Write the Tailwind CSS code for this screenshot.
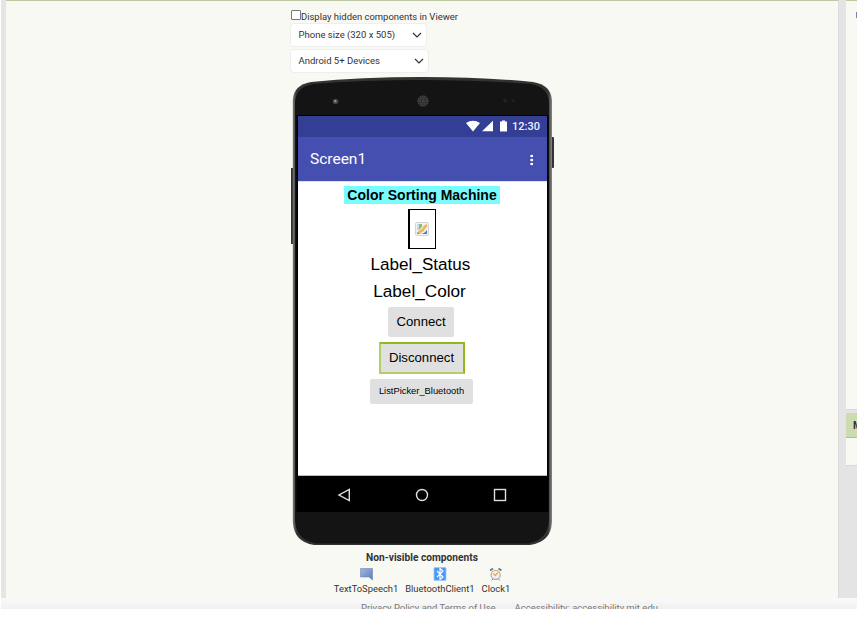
<!DOCTYPE html>
<html lang="en">
<head>
<meta charset="utf-8">
<title>Designer</title>
<script src="https://cdn.jsdelivr.net/npm/@tailwindcss/browser@4"></script>
</head>
<body class="w-[857px] h-[619px] overflow-hidden bg-white font-['Roboto',sans-serif] text-[#333]">
<div class="flex h-[598px] pl-px bg-white">
  <div class="flex w-full bg-[#e4e4e4]">
    <div class="w-[5px] shrink-0 bg-[#e5e5e6]"></div>
    <main class="w-[832px] shrink-0 h-[598px] bg-[#f8f9f3] border-t border-[#bcc8a2] flex flex-col pl-[284px]">
      <label class="flex items-start h-[22px] pt-[9px] text-[9.450px] leading-[14px] whitespace-nowrap pl-px">
        <span class="w-[10px] h-[10px] bg-white border border-[#777] rounded-[1px] shrink-0"></span>
        <span>Display hidden components in Viewer</span>
      </label>
      <div class="w-[137px] h-[24px] bg-white rounded-[4px] border border-[#eeeeec] flex items-center justify-between pl-[7.500px] pr-[4px] text-[9.500px] whitespace-nowrap">
        <span>Phone size (320 x 505)</span>
        <svg width="10" height="10" viewBox="0 0 10 10" fill="none" stroke="#333" stroke-width="1.2"><path d="M1 3l4 4 4-4"/></svg>
      </div>
      <div class="mt-[2px] w-[139px] h-[24px] bg-white rounded-[4px] border border-[#eeeeec] flex items-center justify-between pl-[7.500px] pr-[4px] text-[9.500px] whitespace-nowrap">
        <span>Android 5+ Devices</span>
        <svg width="10" height="10" viewBox="0 0 10 10" fill="none" stroke="#333" stroke-width="1.2"><path d="M1 3l4 4 4-4"/></svg>
      </div>
      <div class="relative w-[264px] h-[473px] ml-px mt-[3px] shrink-0 pl-[7px] pt-[40px]">
        <svg class="absolute left-0 top-0" width="264" height="473" viewBox="0 0 264 473">
          <defs><linearGradient id="rim" x1="0" x2="1" y1="0" y2="0"><stop offset="0" stop-color="#777"/><stop offset=".015" stop-color="#333"/><stop offset=".985" stop-color="#333"/><stop offset="1" stop-color="#888"/></linearGradient></defs>
          <rect x="-.5" y="92" width="3" height="76" rx="1" fill="#333"/>
          <rect x="260" y="61" width="3" height="31" rx="1" fill="#333"/>
          <path d="M1.800 24Q2.500 9 20 6Q70 1 131 1Q192 1 242 6Q260 9 261 24V446Q260 466 239 469H23Q3 466 1.800 446Z" fill="url(#rim)"/>
          <path d="M4 26Q5 11 22 8Q72 4 131 4Q190 4 240 8Q257 11 258 26V444Q257 464 237 467.500H25Q5 464 4 444Z" fill="#141414"/>
          <path d="M5.500 39H257.500V436H5.500Z" fill="#000"/>
          <circle cx="44.500" cy="25.500" r="2.800" fill="#44424a"/><circle cx="44.300" cy="25.200" r="1.100" fill="#9492b4"/>
          <circle cx="132" cy="25" r="5.500" fill="#2c2c2c"/>
          <g fill="none" stroke="#606060" stroke-width="1" stroke-dasharray="1 1"><circle cx="132" cy="25" r="5"/><circle cx="132" cy="25" r="3"/><circle cx="132" cy="25" r="1"/></g>
          <circle cx="214" cy="24.500" r="2" fill="#222"/><circle cx="222" cy="24.500" r="1.500" fill="#202020"/>
        </svg>
        <div class="relative w-[249px] h-[395px] flex flex-col">
          <div class="h-[21px] bg-[#333f94] flex items-center justify-end pr-[7px] text-[11px] leading-[20px] font-medium text-[#eef0ff]">
            <svg class="mr-[5px] shrink-0 -mt-[2px]" width="41" height="12" viewBox="0 0 41 12" fill="#fff"><path d="M0 3Q7-1.500 14 3L7 11.500Z"/><path d="M27 .8V11.300H16Z"/><path d="M34 1.500h2V.5h3v1h2v10h-7Z"/></svg>
            <span>12:30</span>
          </div>
          <div class="h-[44px] bg-[#444fb0] flex items-center justify-between pl-[12px] pr-[13px] pt-px text-white text-[15.500px]">
            <span>Screen1</span>
            <svg width="4" height="12" viewBox="0 0 4 12" fill="#fff"><rect x=".4" y=".9" width="2.600" height="2.200"/><rect x=".4" y="4.900" width="2.600" height="2.200"/><rect x=".4" y="8.900" width="2.600" height="2.200"/></svg>
          </div>
          <div class="h-[295px] bg-white border-t border-t-[#dedff0] border-b border-b-[#bbb] flex flex-col items-center pt-[4px] pr-px text-black font-['Liberation_Sans',Arial,sans-serif] whitespace-nowrap">
            <div class="w-[156px] h-[18px] bg-[#78fcfd] text-[14px] leading-[18px] font-bold text-center">Color Sorting Machine</div>
            <div class="mt-[5px] w-[28px] h-[40px] border border-black flex items-center justify-center shrink-0 border-l-2">
              <svg class="-ml-px" width="14" height="14" viewBox="0 0 14 14"><rect x=".5" y=".5" width="13" height="13" rx="1.500" fill="#f3f4f2" stroke="#d2d4d8"/><path d="M2 2h3v3L2 9Z" fill="#cad7f2"/><path d="M2 12Q3 8 7 7Q8 3 12 2V5Q10 6 9 9Q6 11 2 12Z" fill="#f1b65c"/><path d="M4 2h3Q8 6 3 8Q5 5 4 2Z" fill="#91bd62"/><path d="M12 8v4H6Q10 11 12 8Z" fill="#527cc8"/><path d="M2 10v2h4Z" fill="#7c9dd8"/></svg>
            </div>
            <div class="mt-[4px] h-[24px] text-[17.100px] leading-[24px] mr-[3px]">Label_Status</div>
            <div class="mt-[2px] h-[24px] text-[17.200px] leading-[24px] mr-[5px]">Label_Color</div>
            <div class="mt-[4px] mr-[2px] w-[66px] h-[30px] bg-[#e0e0e0] rounded-[2px] text-[13.200px] leading-[29px] text-center">Connect</div>
            <div class="mt-[5px] w-[86px] h-[32px] bg-[#e0e0e0] border-2 border-t-[#90b81d] border-r-[#90b81d] border-b-[#b2ce67] border-l-[#b2ce67] text-[13.200px] leading-[28px] text-center pr-px">Disconnect</div>
            <div class="mt-[5px] mr-px w-[103px] h-[25px] bg-[#e0e0e0] rounded-[2px] text-[9.350px] leading-[24px] text-center">ListPicker_Bluetooth</div>
          </div>
          <div class="h-[35px] bg-black flex items-center pl-[39px] pt-[2px]">
            <svg width="170" height="16" viewBox="0 0 170 16" fill="none" stroke="#ddd" stroke-width="1.400"><path d="M12.300 2.500V13.500L2 8Z"/><circle cx="85" cy="8" r="5.500"/><rect x="157.500" y="2.500" width="11" height="11"/></svg>
          </div>
        </div>
      </div>
      <div class="w-[262px] flex flex-col items-center pt-px">
        <div class="text-[10.200px] leading-[15px] h-[14px] font-bold ml-[2px]">Non-visible components</div>
        <div class="flex mt-[3px] gap-[7px] text-[9.400px] leading-[12px] whitespace-nowrap ml-[2px]">
          <div class="flex flex-col items-center gap-[2px]">
            <svg width="14" height="14" viewBox="0 0 14 14"><defs><linearGradient id="sp" x1="0" y1="0" x2="1" y2="1"><stop stop-color="#9fb8e2"/><stop offset="1" stop-color="#5c7db5"/></linearGradient></defs><path d="M1.500 1.500h12V13L10 10H1.500Z" fill="url(#sp)" stroke="#7089b4" stroke-width=".6"/></svg>
            <span>TextToSpeech1</span>
          </div>
          <div class="flex flex-col items-center gap-[2px]">
            <svg width="14" height="14" viewBox="0 0 14 14"><rect x="1" y=".5" width="12" height="13" rx="1" fill="#4c99f3" stroke="#9ac7f8" stroke-width=".8"/><path d="M4 4l6 6-3 2.500V1.500L10 4 4 10" fill="none" stroke="#fff" stroke-width="1.100"/></svg>
            <span>BluetoothClient1</span>
          </div>
          <div class="flex flex-col items-center gap-[2px]">
            <svg width="14" height="14" viewBox="0 0 14 14"><path d="M1 3.500L4 1.500M12.500 3.500L9.500 1.500" stroke="#777" stroke-width="1.800"/><path d="M2.500 13.500l2-2M11 13.500l-2-2" stroke="#888"/><circle cx="6.700" cy="7.800" r="4.600" fill="#f0f0ee" stroke="#aaa" stroke-width="1.100"/><path d="M4.300 6.500L6.400 8.500 9.200 5.200" fill="none" stroke="#eeaa45" stroke-width="1.300"/></svg>
            <span>Clock1</span>
          </div>
        </div>
      </div>
    </main>
    <div class="w-[8px] shrink-0 bg-[#e4e4e6] border-l border-[#dcdcdc]"></div>
    <aside class="w-[11px] shrink-0 flex flex-col overflow-hidden">
      <div class="h-[410px] bg-[#f8f9f3] border-t border-[#bcc8a2] border-b border-b-[#d8d8d8] flex pt-[11px] pl-[10px] shrink-0"><span class="w-px h-[6px] bg-[#7b82a8]"></span></div>
      <div class="mt-[3px] h-[25px] bg-[#ccdcb0] border-b border-[#b2bba2] pl-[7px] text-[10px] leading-[25px] font-bold shrink-0">M</div>
      <div class="h-[28px] bg-[#f8f9f3] border-b border-[#d8d8d8] shrink-0"></div>
    </aside>
  </div>
</div>
<footer class="ml-px h-[11px] overflow-hidden bg-linear-to-b from-[#fafafa] to-[#f0f0f0] flex gap-[19px] pl-[360px] pt-[3px] text-[9.480px] leading-[14px] text-[#777] whitespace-nowrap">
  <span>Privacy Policy and Terms of Use</span>
  <span>Accessibility: accessibility.mit.edu</span>
</footer>
</body>
</html>
